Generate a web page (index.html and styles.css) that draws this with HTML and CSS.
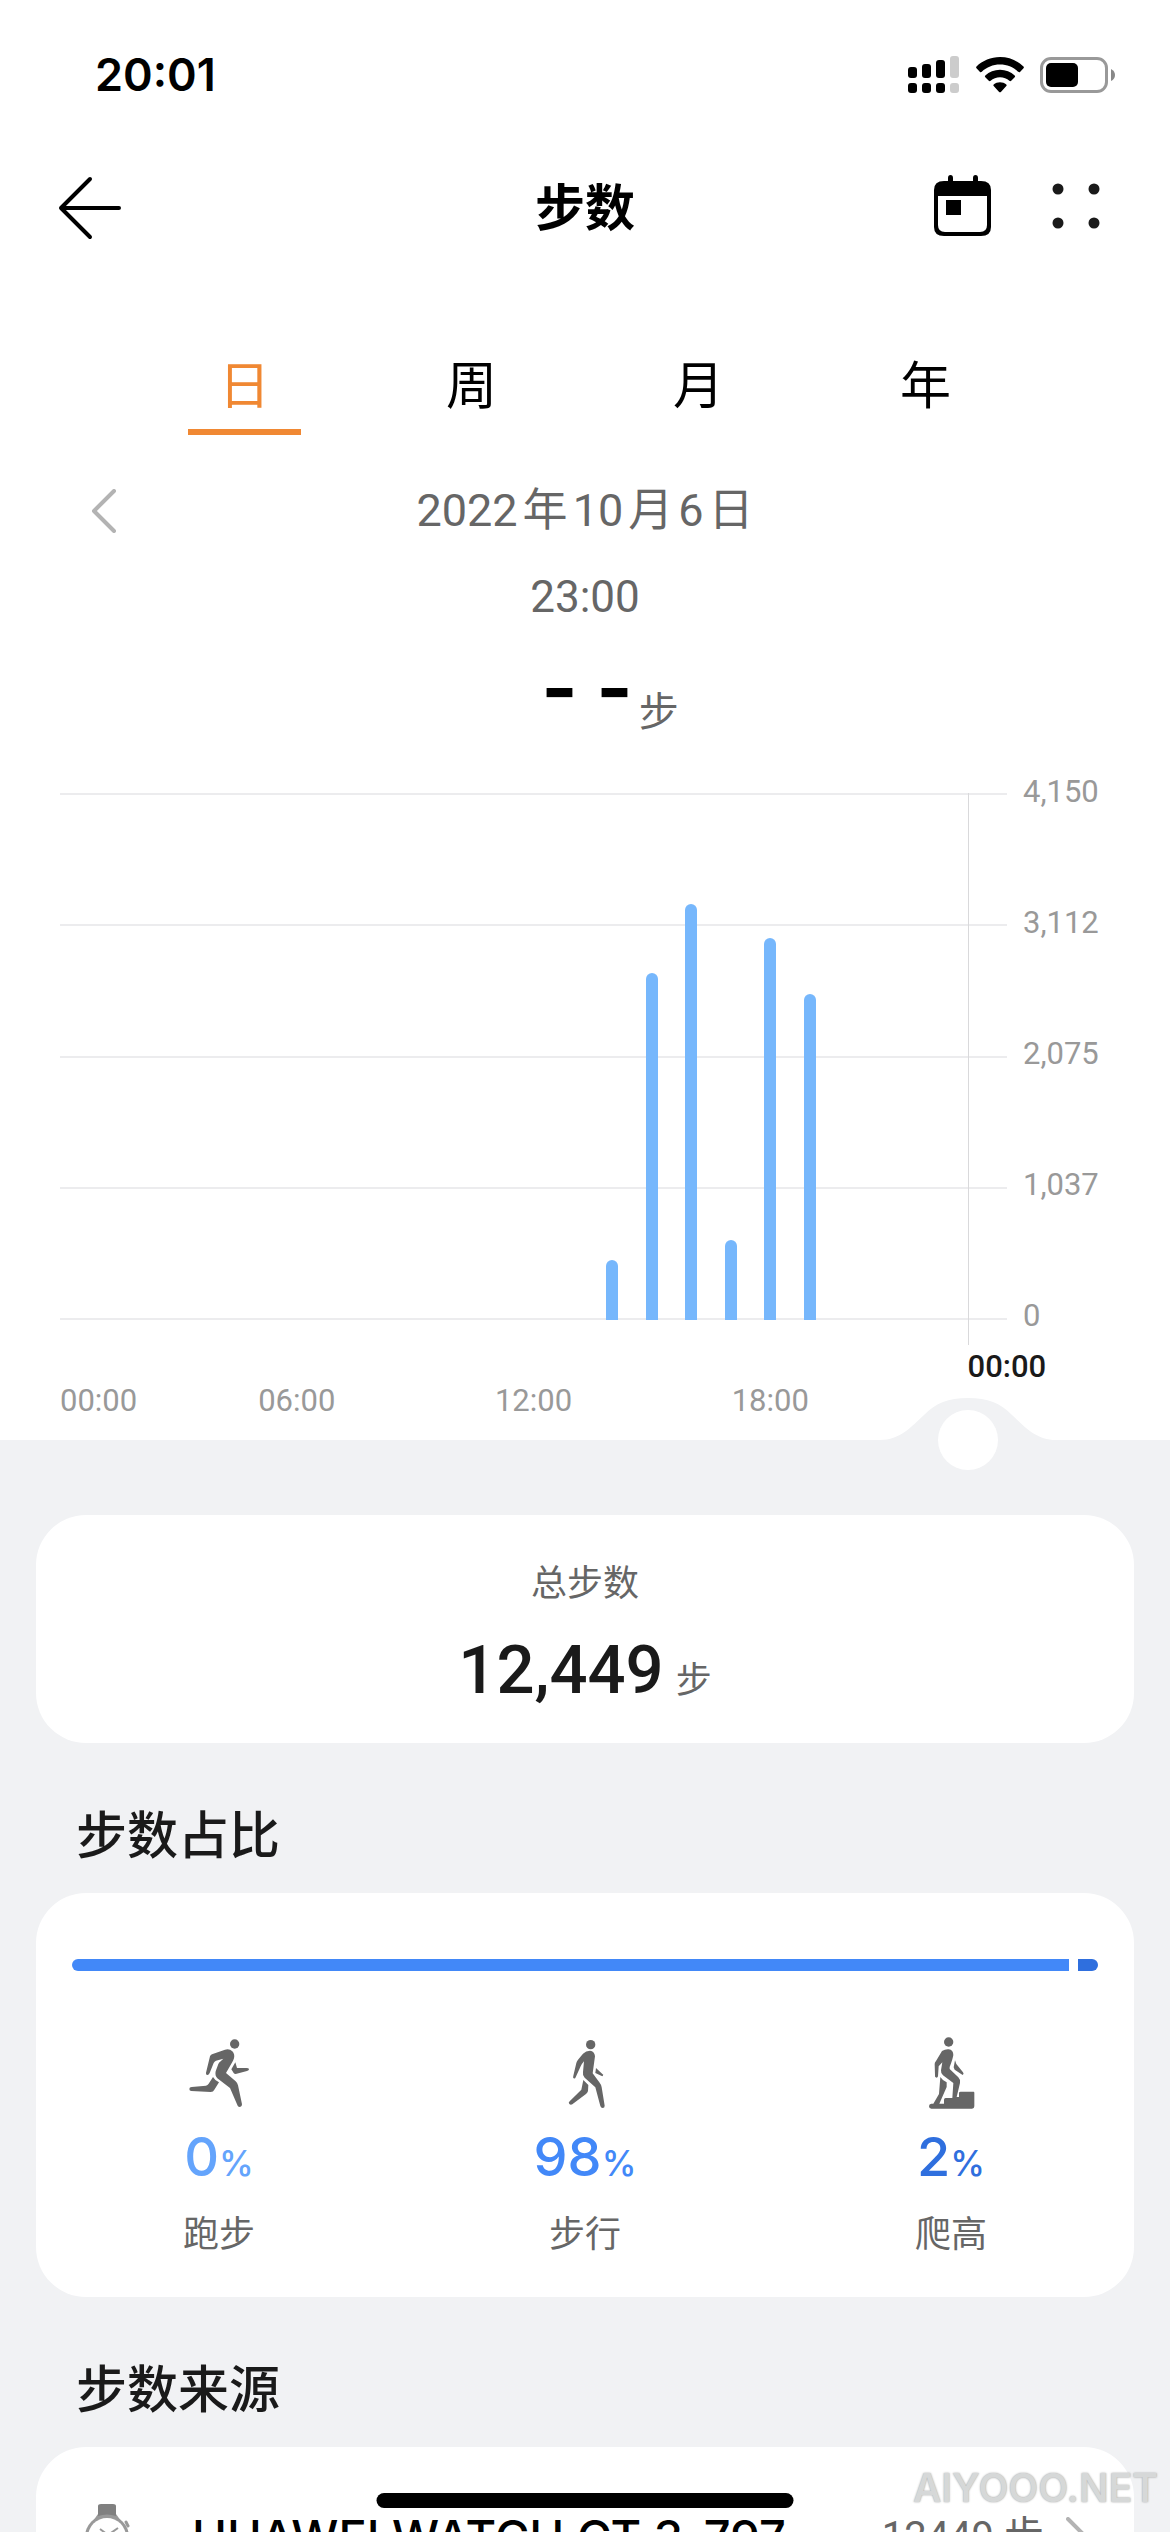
FILE: index.html
```html
<!DOCTYPE html>
<html lang="zh-CN">
<head>
<meta charset="utf-8">
<meta name="viewport" content="width=device-width, initial-scale=1">
<title>步数</title>
<link rel="stylesheet" href="styles.css">
</head>
<body>
<div class="app">
  <div class="status">
    <time class="status-time">20:01</time>
    <div class="status-icons">
      <svg width="52" height="38" viewBox="0 0 52 38" aria-hidden="true">
        <rect x="0" y="11" width="9" height="11" rx="3"/><rect x="14" y="8" width="9" height="14" rx="3"/><rect x="28" y="4" width="9" height="18" rx="3"/>
        <rect x="0" y="27" width="9" height="10" rx="3"/><rect x="14" y="27" width="9" height="10" rx="3"/><rect x="28" y="27" width="9" height="10" rx="3"/>
        <g fill="#ccc"><rect x="42" y="0" width="9" height="22" rx="3"/><rect x="42" y="27" width="9" height="10" rx="3"/></g>
      </svg>
      <svg width="48" height="36" viewBox="0 0 48 36" aria-hidden="true">
        <path d="M24 0C14.900 0 6.600 3.600 .500 9.400Q-.300 10.300 .500 11.200L4 14.900Q4.900 15.600 5.800 14.800C10.600 10.300 17 7.600 24 7.600S37.400 10.300 42.200 14.800Q43.100 15.600 44 14.900L47.500 11.200Q48.300 10.300 47.500 9.400C41.400 3.600 33.100 0 24 0Z"/>
        <path d="M24 12.700C18.400 12.700 13.200 14.900 9.300 18.400Q8.400 19.300 9.300 20.200L12.800 23.800Q13.700 24.500 14.600 23.800C17.100 21.600 20.400 20.200 24 20.200S30.900 21.600 33.400 23.800Q34.300 24.500 35.200 23.800L38.700 20.200Q39.600 19.300 38.700 18.400C34.800 14.900 29.600 12.700 24 12.700Z"/>
        <path d="M24 25.200C21.600 25.200 19.400 26 17.700 27.400Q16.800 28.200 17.700 29.100L23.100 34.900Q24 35.700 24.900 34.900L30.300 29.100Q31.200 28.200 30.300 27.400C28.600 26 26.400 25.200 24 25.200Z"/>
      </svg>
      <svg width="76" height="36" viewBox="0 0 76 36" aria-hidden="true">
        <rect x="1.500" y="1.500" width="65" height="33" rx="9.500" fill="none" stroke="#999" stroke-width="3"/>
        <rect x="6" y="6" width="32" height="24" rx="5"/>
        <path d="M71 12Q75 14 75 18T71 24Z" fill="#888"/>
      </svg>
    </div>
  </div>

  <header class="header">
    <button class="icon-button" type="button" aria-label="返回">
      <svg width="64" height="64" viewBox="0 0 64 64" fill="none" stroke="#000" stroke-width="4" stroke-linecap="round" stroke-linejoin="round"><path d="M32 3L3 32L32 61M3 32H61"/></svg>
    </button>
    <h1 class="title">步数</h1>
    <div class="header-actions">
      <button class="icon-button" type="button" aria-label="日历">
        <svg width="58" height="62" viewBox="0 0 58 62">
          <path fill-rule="evenodd" d="M10 6H14V3Q14 0 16.500 0T19 3V6H39V3Q39 0 41.500 0T44 3V6H47Q57 6 57 15V52Q57 61 47 61H10Q0 61 0 52V15Q0 6 10 6ZM4 21V50Q4 57 11 57H46Q53 57 53 50V21Z"/>
          <rect x="12" y="25" width="15" height="15"/>
        </svg>
      </button>
      <button class="icon-button" type="button" aria-label="更多">
        <svg width="48" height="46" viewBox="0 0 48 46" fill="#1a1a1a"><circle cx="6" cy="6" r="5.500"/><circle cx="42" cy="6" r="5.500"/><circle cx="6" cy="40" r="5.500"/><circle cx="42" cy="40" r="5.500"/></svg>
      </button>
    </div>
  </header>

  <main class="content">
    <section class="overview">
      <nav class="tabs">
        <a class="tab tab-active" href="#day">日</a>
        <a class="tab" href="#week">周</a>
        <a class="tab" href="#month">月</a>
        <a class="tab" href="#year">年</a>
      </nav>

      <div class="date-row">
        <button class="icon-button" type="button" aria-label="前一天">
          <svg width="26" height="44" viewBox="0 0 26 44" fill="none" stroke="#b3b3b3" stroke-width="4" stroke-linecap="round" stroke-linejoin="round"><path d="M23 2L3 22L23 42"/></svg>
        </button>
        <span class="date"><span>2022</span><span>年</span><span>10</span><span>月</span><span>6</span><span>日</span></span>
      </div>
      <p class="hour">23:00</p>
      <p class="reading"><span class="reading-value">- -</span><span class="reading-unit">步</span></p>

      <div class="chart">
        <div class="plot">
          <div class="gridlines"><i></i><i></i><i></i><i></i></div>
          <div class="bars">
            <i class="bar" style="grid-column:15;height:11.400%"></i>
            <i class="bar" style="grid-column:16;height:65.800%"></i>
            <i class="bar" style="grid-column:17;height:79%"></i>
            <i class="bar" style="grid-column:18;height:15.200%"></i>
            <i class="bar" style="grid-column:19;height:72.500%"></i>
            <i class="bar" style="grid-column:20;height:61.800%"></i>
            <i class="cursor"></i>
          </div>
        </div>
        <div class="scale"><span>4,150</span><span>3,112</span><span>2,075</span><span>1,037</span><span>0</span></div>
        <div class="hours">
          <span class="hour-selected">00:00</span>
          <span class="hour-0">00:00</span>
          <span class="hour-6">06:00</span>
          <span class="hour-12">12:00</span>
          <span class="hour-18">18:00</span>
        </div>
      </div>
      <svg class="scrubber" width="176" height="72" viewBox="0 0 176 72" aria-hidden="true">
        <path d="M0 42C20 42 31 29 44 17C56 5 68 0 88 0S120 5 132 17C145 29 156 42 176 42V72H0Z" fill="#f1f2f4"/>
        <circle cx="88" cy="42" r="30" fill="#fff"/>
      </svg>
    </section>

    <section class="card total">
      <p class="caption">总步数</p>
      <p class="total-line"><span class="total-value">12,449</span><span class="caption">步</span></p>
    </section>

    <h2 class="heading">步数占比</h2>
    <section class="card share">
      <div class="share-bar"><i class="share-walk"></i><i class="share-climb"></i></div>
      <div class="share-items">
        <div class="share-item">
          <svg width="72" height="72" viewBox="0 0 216 216" fill="#666" aria-hidden="true">
            <circle cx="155" cy="21" r="14"/>
            <path d="M81 58Q83 54 87 52L126 38Q139 34 148 43Q156 52 153 64Q151 70 148 75L129 108L158 133Q163 138 165 145L177 202Q177 210 171 210Q166 210 164 206L141 153L103 124Q95 116 98 103L106 81Q108 76 113 73L121 65L99 71Q94 73 92 78L80 108Q77 115 72 114Q68 113 69 107Z"/>
            <path d="M157 76L162 93L190 93Q198 93 198 97Q198 101 192 102L158 111Q154 111 152 108L145 97Z"/>
            <path d="M90 120Q96 131 108 136L94 158Q91 165 83 165L25 162Q19 162 19 156T26 150L69 146Q74 145 77 140Z"/>
          </svg>
          <p class="percent percent-run">0<small>%</small></p>
          <p class="caption">跑步</p>
        </div>
        <div class="share-item">
          <svg width="72" height="72" viewBox="0 0 216 216" fill="#666" aria-hidden="true">
            <circle cx="125" cy="23" r="14"/>
            <path d="M102 50Q111 41 123 41Q137 43 138 58L131 109L151 136Q156 142 158 151L167 206Q167 213 161 213Q156 213 154 207L139 151L107 122Q100 115 102 105L105 73Q98 81 95 88L80 121Q78 126 74 124Q71 122 73 116L82 78Q83 73 87 68Z"/>
            <path d="M141 93L161 112Q164 116 160 118L139 108Z"/>
            <path d="M103 129L118 144L117 162Q116 167 111 171L70 202Q65 205 61 201T62 193L97 158Z"/>
          </svg>
          <p class="percent percent-walk">98<small>%</small></p>
          <p class="caption">步行</p>
        </div>
        <div class="share-item">
          <svg width="72" height="72" viewBox="0 0 216 216" fill="#666" aria-hidden="true">
            <circle cx="101" cy="15" r="14"/>
            <path d="M81 42Q91 36 101 37Q115 39 115 54Q113 67 104 90L104 96L130 121Q137 128 135 138L125 180H132V168Q132 164 137 164H176Q178 164 178 168V208Q178 215 171 215H49Q42 215 42 208T49 200H55L72 171L76 120Q84 132 95 136V150L73 200H87V188Q87 183 92 183H112L115 138L84 115Q77 109 78 100L82 76L71 88L69 118Q67 124 62 121Q59 119 60 114L59 81Q59 77 63 72Z"/>
            <path d="M120 70L124 81L144 106Q148 111 143 114L119 98L116 91Z"/>
          </svg>
          <p class="percent percent-climb">2<small>%</small></p>
          <p class="caption">爬高</p>
        </div>
      </div>
    </section>

    <h2 class="heading">步数来源</h2>
    <section class="card">
      <a class="source" href="#source">
        <svg width="48" height="66" viewBox="0 0 48 66" aria-hidden="true">
          <path d="M14 10L4 24V42L14 56H32L42 42V24L32 10Z" fill="#999"/>
          <circle cx="23" cy="33" r="22" fill="#999"/>
          <path d="M14 2Q14 0 17 0H29Q32 0 32 2V12Q23 9 14 12Z" fill="#808080"/>
          <path d="M14 64Q14 66 17 66H29Q32 66 32 64V54Q23 57 14 54Z" fill="#808080"/>
          <circle cx="23" cy="33" r="19" fill="#fff"/>
          <path d="M42 18L44 22" stroke="#999" stroke-width="3" stroke-linecap="round"/>
          <path d="M16 25L24 31L34 24" fill="none" stroke="#999" stroke-width="2"/>
        </svg>
        <span class="source-name">HUAWEI WATCH GT 3-797</span>
        <span class="source-steps">12449 步</span>
        <svg width="22" height="40" viewBox="0 0 22 40" fill="none" stroke="#b3b3b3" stroke-width="4" stroke-linecap="round" stroke-linejoin="round" aria-hidden="true"><path d="M2 2L20 20L2 38"/></svg>
      </a>
    </section>
  </main>
  <div class="watermark">AIYOOO.NET</div>
  <div class="home-indicator"></div>
</div>
</body>
</html>
```
FILE: styles.css
```css
* {
  box-sizing: border-box;
}

body,
h1,
h2,
p {
  margin: 0;
}

body {
  background: #f1f2f4;
  color: #1a1a1a;
  font-family: Roboto, "Noto Sans CJK SC", sans-serif;
}

svg {
  display: block;
  flex: none;
}

a {
  color: inherit;
  text-decoration: none;
}

.app {
  position: relative;
  display: flex;
  flex-direction: column;
  height: 100vh;
  overflow: hidden;
}

.status {
  display: flex;
  align-items: center;
  justify-content: space-between;
  padding: 50px 54px 0 95px;
  background: #fff;
}

.status-time {
  color: #000;
  font-family: Inter, sans-serif;
  font-size: 45px;
  font-weight: 600;
  line-height: 50px;
}

.status-icons {
  display: flex;
  align-items: center;
  gap: 16px;
}

.header {
  display: grid;
  grid-template-columns: 1fr auto 1fr;
  align-items: center;
  padding: 72px 70px 24px 58px;
  background: #fff;
}

.icon-button {
  justify-self: start;
  padding: 0;
  border: 0;
  background: none;
}

.title {
  padding: 2px 0 0 12px;
  color: #000;
  font-size: 50px;
  font-weight: 700;
  line-height: 70px;
}

.header-actions {
  display: flex;
  align-items: center;
  justify-content: flex-end;
  gap: 60px;
  padding-bottom: 4px;
}

.content {
  flex: 1;
  overflow-y: auto;
  scrollbar-width: none;
}

.overview {
  position: relative;
  height: max-content;
  padding: 83px 0 24px;
  background: #fff;
}

.tabs {
  display: grid;
  grid-template-columns: repeat(4, 1fr);
  justify-items: center;
  padding: 0 131px;
}

.tab {
  min-width: 113px;
  padding-bottom: 6px;
  border-bottom: 6px solid transparent;
  color: #000;
  font-size: 51px;
  line-height: 72px;
  text-align: center;
}

.tab-active {
  border-color: #f08833;
  color: #f08833;
}

.date-row {
  display: grid;
  grid-template-columns: 1fr auto 1fr;
  align-items: center;
  padding: 46px 91px 0;
}

.date {
  display: flex;
  gap: 5px;
  color: #666;
  font-size: 45px;
  line-height: 60px;
}

.hour {
  padding-top: 30px;
  color: #666;
  font-size: 44px;
  line-height: 52px;
  text-align: center;
}

.reading {
  display: flex;
  align-items: flex-start;
  justify-content: center;
  gap: 6px;
  padding: 34px 0 0 50px;
}

.reading-value {
  color: #000;
  font-family: Inter, sans-serif;
  font-size: 78px;
  font-weight: 700;
  line-height: 62px;
}

.reading-unit {
  padding-top: 30px;
  color: #666;
  font-size: 40px;
  line-height: 52px;
}

.chart {
  display: grid;
  grid-template-columns: 1fr 147px;
  column-gap: 16px;
  padding: 54px 0 0 60px;
  color: #999;
  font-size: 31px;
  line-height: 34px;
}

.plot {
  position: relative;
  height: 527px;
}

.gridlines {
  display: flex;
  flex-direction: column;
  height: 100%;
  border-bottom: 2px solid #ececee;
}

.gridlines i {
  flex: 1;
  border-top: 2px solid #ececee;
}

.bars {
  position: absolute;
  inset: 0;
  display: grid;
  grid-template-columns: repeat(24, minmax(0, 1fr));
  grid-template-rows: 100%;
  align-items: end;
}

.bar {
  grid-row: 1;
  width: 12px;
  margin-left: -6px;
  border-radius: 6px 6px 0 0;
  background: #76b7fc;
}

.cursor {
  grid-row: 1;
  grid-column: 24;
  align-self: start;
  width: 1px;
  height: 552px;
  background: #d9d9db;
}

.scale {
  display: flex;
  flex-direction: column;
  justify-content: space-between;
  margin: -18px 0 -13px;
}

.hours {
  display: grid;
  grid-template-columns: repeat(24, minmax(0, 1fr));
  justify-items: center;
  padding-top: 30px;
  margin-bottom: -2px;
}

.hour-selected {
  grid-area: 1 / 24;
  justify-self: start;
  color: #1a1a1a;
  font-weight: 500;
}

.hour-0 {
  grid-area: 2 / 1 / 3 / 5;
  justify-self: start;
}

.hour-6 {
  grid-area: 2 / 5 / 3 / 9;
}

.hour-12 {
  grid-area: 2 / 11 / 3 / 15;
}

.hour-18 {
  grid-area: 2 / 17 / 3 / 21;
}

.scrubber {
  position: absolute;
  bottom: -30px;
  left: calc(60px + (100% - 223px) * 23 / 24);
  transform: translateX(-50%);
}

.card {
  margin: 0 36px;
  border-radius: 50px;
  background: #fff;
}

.total {
  margin-top: 75px;
  padding: 43px 0 34px;
  text-align: center;
}

.caption {
  color: #666;
  font-size: 36px;
  line-height: 52px;
}

.total-line {
  display: flex;
  align-items: baseline;
  justify-content: center;
  gap: 12px;
  padding-top: 21px;
}

.total-value {
  font-size: 67px;
  font-weight: 500;
  line-height: 78px;
}

.heading {
  padding: 58px 76px 20px;
  font-size: 51px;
  font-weight: 500;
  line-height: 72px;
}

.share {
  padding: 66px 0 36px;
}

.share-bar {
  display: flex;
  gap: 9px;
  height: 12px;
  margin: 0 36px;
  border-radius: 6px;
  overflow: hidden;
}

.share-walk {
  flex: 98;
  background: #4288f8;
}

.share-climb {
  flex: 2;
  background: #2f6fde;
}

.share-items {
  display: grid;
  grid-template-columns: repeat(3, 1fr);
  padding-top: 66px;
}

.share-item {
  display: flex;
  flex-direction: column;
  align-items: center;
}

.percent {
  padding: 14px 0 18px;
  font-family: Inter, sans-serif;
  font-size: 54px;
  font-weight: 500;
  line-height: 68px;
}

.percent small {
  font-size: 35px;
  line-height: 36px;
}

.percent-run {
  color: #64a4fc;
}

.percent-walk {
  color: #4288f8;
}

.percent-climb {
  color: #2f6fde;
}

.source {
  display: flex;
  align-items: center;
  padding: 57px 46px 50px 48px;
  line-height: 66px;
}

.source-name {
  flex: 1;
  margin-left: 60px;
  color: #000;
  font-family: Inter, sans-serif;
  font-size: 47px;
  font-weight: 500;
}

.source-steps {
  margin-right: 22px;
  color: #666;
  font-size: 40px;
}

.home-indicator {
  position: absolute;
  bottom: 24px;
  left: 50%;
  width: 417px;
  height: 15px;
  border-radius: 8px;
  background: #000;
  transform: translateX(-50%);
}

.watermark {
  position: absolute;
  right: 12px;
  bottom: 20px;
  color: #d6d8d8;
  font-family: Inter, sans-serif;
  font-size: 39px;
  font-weight: 600;
  line-height: 48px;
  text-shadow: 0 0 2px #999;
}
```
